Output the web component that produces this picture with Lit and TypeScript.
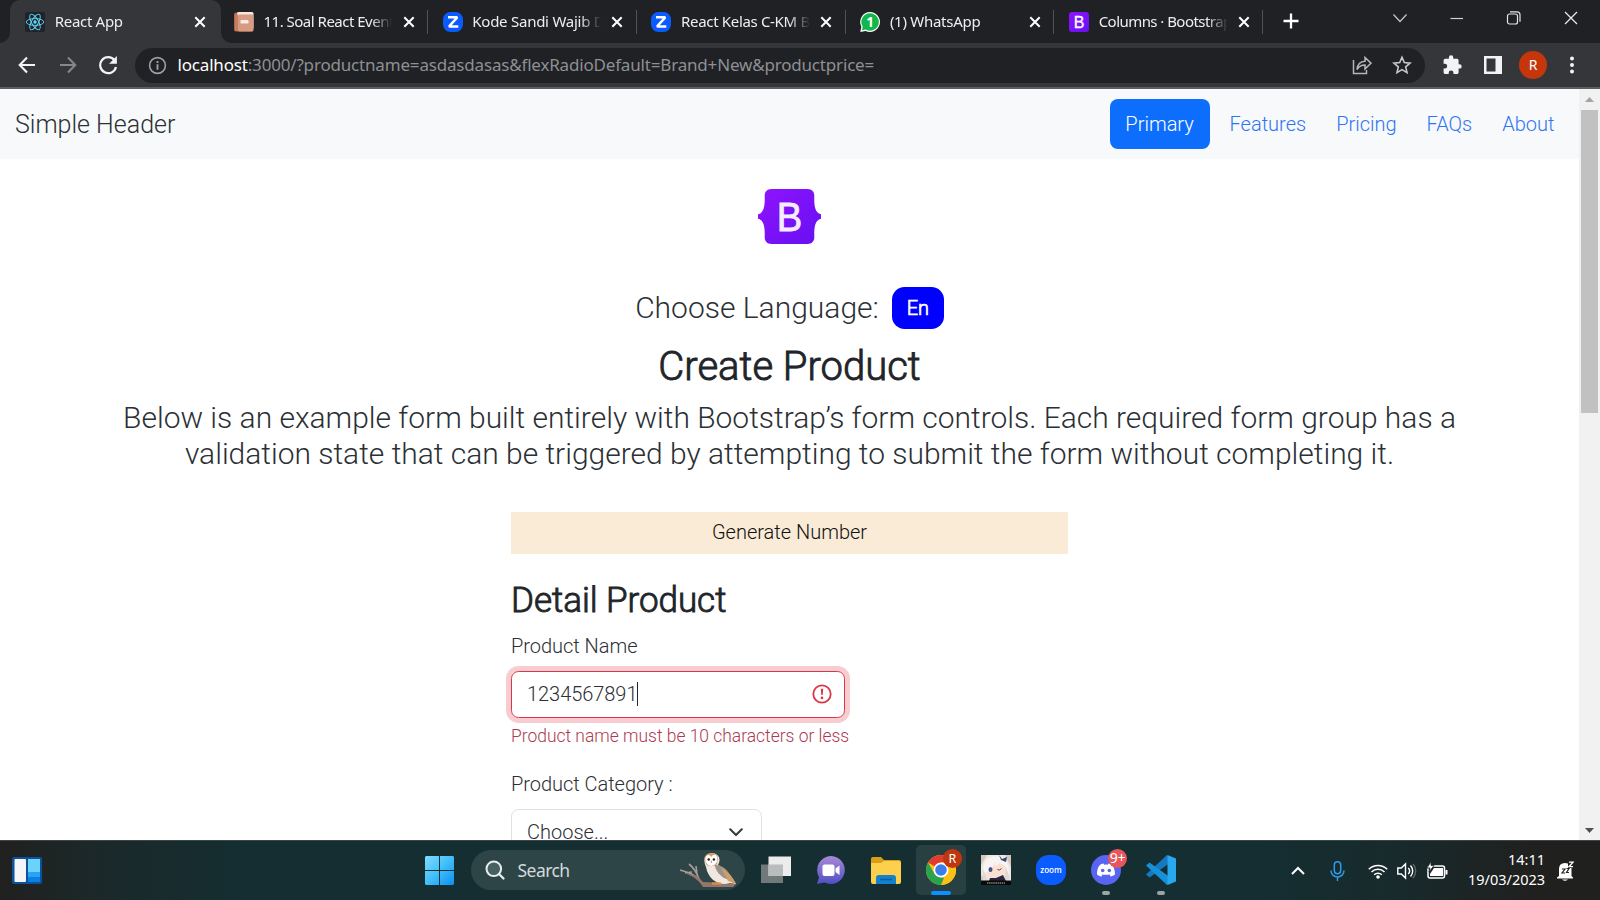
import { LitElement, html, css, svg } from "lit";
import { customElement } from "lit/decorators.js";

type Tab = { title: string; icon: unknown; active?: boolean; fit: string };

const reactIcon = svg`<svg width="20" height="20" viewBox="0 0 20 20"><rect width="20" height="20" rx="2" fill="#20232a"/><g fill="none" stroke="#61dafb" stroke-width=".9"><ellipse cx="10" cy="10" rx="8.8" ry="3.4"/><ellipse cx="10" cy="10" rx="8.8" ry="3.4" transform="rotate(60 10 10)"/><ellipse cx="10" cy="10" rx="8.8" ry="3.4" transform="rotate(120 10 10)"/></g><circle cx="10" cy="10" r="1.7" fill="#61dafb"/></svg>`;
const bookIcon = svg`<svg width="20" height="20" viewBox="0 0 20 20"><rect x="0" y=".5" width="19" height="19" rx="2" fill="#b5654c"/><rect x="3" y="0" width="16.500" height="17" rx="1.500" fill="#f3e7e0"/><rect x="4" y="2.500" width="15.500" height="17" rx="1.500" fill="#d89a80"/><rect x="1" y="2.500" width="3" height="16.500" fill="#c67c62"/><rect x="6.500" y="8" width="8" height="3.600" rx="1.200" fill="#f8ece6"/></svg>`;
const zIcon = svg`<svg width="20" height="20" viewBox="0 0 20 20"><rect width="20" height="20" rx="7.500" fill="#0b5cff"/><path d="M5 5.300h9.300L6 14.500h9.300" fill="none" stroke="#fff" stroke-width="2.500" stroke-linejoin="bevel"/></svg>`;
const waIcon = svg`<svg width="20" height="20" viewBox="0 0 20 20"><path d="M10 0a10 10 0 1 1-4.400 19L.3 20l1-5.300A10 10 0 0 1 10 0z" fill="#fff"/><path d="M10 1.300a8.700 8.700 0 1 1-4.300 16.200L2 18.300l.7-3.700A8.700 8.700 0 0 1 10 1.300z" fill="#12b64a"/><text x="10" y="15" text-anchor="middle" font-family="Open Sans" font-weight="700" font-size="13.500" fill="#fff">1</text></svg>`;
const bsIcon = svg`<svg width="20" height="20" viewBox="0 0 20 20"><defs><linearGradient id="bt" x1="0" y1="0" x2="1" y2="1"><stop stop-color="#9013fe"/><stop offset="1" stop-color="#6610f2"/></linearGradient></defs><rect width="20" height="20" rx="3" fill="url(#bt)"/><text x="10" y="15.600" text-anchor="middle" font-family="Liberation Sans" font-size="16" fill="#fff" stroke="#fff" stroke-width=".3">B</text></svg>`;

const TABS: Tab[] = [
  { title: "React App", icon: reactIcon, active: true, fit: "f0" },
  { title: "11. Soal React Event", icon: bookIcon, fit: "f1" },
  { title: "Kode Sandi Wajib Di", icon: zIcon, fit: "f2" },
  { title: "React Kelas C-KM Be", icon: zIcon, fit: "f3" },
  { title: "(1) WhatsApp", icon: waIcon, fit: "f4" },
  { title: "Columns · Bootstrap", icon: bsIcon, fit: "f5" },
];

@customElement("browser-tabs")
class BrowserTabs extends LitElement {
  static styles = css`
    :host { display: flex; height: 43px; background: #202124; padding-left: 10px; font-family: "Noto Sans", sans-serif; }
    .tab { width: 208.800px; height: 43px; box-sizing: border-box; padding: 0 12px 0 15px; display: flex; align-items: center; position: relative; flex: none; }
    .tab.active { background: #35363a; border-radius: 10px 10px 0 0; width: 210.800px; padding-right: 14px; }
    .tab.active + .tab { margin-left: -2px; }
    .tab.active::before, .tab.active::after { content: ""; position: absolute; bottom: 0; width: 10px; height: 10px; }
    .tab.active::before { left: -10px; background: radial-gradient(circle at 0 0, transparent 9.500px, #35363a 10px); }
    .tab.active::after { right: -10px; background: radial-gradient(circle at 100% 0, transparent 9.500px, #35363a 10px); }
    .icon { width: 20px; height: 20px; flex: none; margin-top: 1px; }
    .title { width: 130px; margin-left: 9.700px; margin-top: -1px; white-space: nowrap; overflow: hidden; color: #eceef0; font-size: 15px; line-height: 24px; height: 24px; -webkit-mask-image: linear-gradient(90deg, #000 108px, transparent 129px); mask-image: linear-gradient(90deg, #000 108px, transparent 129px); }
    .f0 { letter-spacing: -0.3px; } .f1 { letter-spacing: -0.5px; } .f2 { letter-spacing: -0.25px; } .f3 { letter-spacing: -0.33px; } .f4 { letter-spacing: -0.27px; } .f5 { letter-spacing: -0.55px; }
    .close { flex: none; margin-left: auto; margin-right: 1px; }
    .sep { position: absolute; right: -.5px; top: 10px; height: 24px; width: 1px; background: #505256; }
    .plus { margin: 13px 0 0 20.500px; flex: none; }
    .win { margin-left: auto; display: flex; align-items: center; height: 36px; gap: 37px; padding-right: 19px; }
    svg { display: block; }
  `;
  render() {
    return html`
      ${TABS.map((t) => html`<div class="tab ${t.active ? "active" : ""}">
        <div class="icon">${t.icon}</div><div class="title ${t.fit}">${t.title}</div>
        <svg class="close" width="12" height="12" viewBox="0 0 12 12"><path d="M1.300 1.300l9.400 9.400M10.700 1.300L1.300 10.700" stroke="#fff" stroke-width="2"/></svg>
        ${t.active ? "" : html`<div class="sep"></div>`}
      </div>`)}
      <svg class="plus" width="16" height="16" viewBox="0 0 16 16"><path d="M8 .5v15M.5 8h15" stroke="#fff" stroke-width="2.300"/></svg>
      <div class="win">
        <svg width="20" height="16" viewBox="0 0 20 16"><path d="M3.500 4.500L10 11.500l6.500-7" fill="none" stroke="#c8c8c8" stroke-width="1.200"/></svg>
        <svg width="20" height="16" viewBox="0 0 20 16"><path d="M3.500 8.500h12.500" stroke="#d0d0d0" stroke-width="1.200"/></svg>
        <svg width="20" height="16" viewBox="0 0 20 16"><g fill="none" stroke="#e4e4e4" stroke-width="1.200"><rect x="3.500" y="4" width="10" height="10" rx="2"/><path d="M6 1.800h7a3 3 0 0 1 3 3v7"/></g></svg>
        <svg width="20" height="16" viewBox="0 0 20 16"><path d="M4 2l12 12M16 2L4 14" stroke="#e8e8e8" stroke-width="1.300"/></svg>
      </div>`;
  }
}

@customElement("browser-toolbar")
class BrowserToolbar extends LitElement {
  static styles = css`
    :host { display: flex; align-items: center; height: 46px; box-sizing: border-box; background: #35363a; border-bottom: 2px solid #5c5d60; padding: 0 24px 0 17px; font-family: "Noto Sans", sans-serif; }
    svg { display: block; flex: none; }
    .nav { display: flex; gap: 20.500px; align-items: center; }
    .box { margin-left: 17px; width: 1290px; height: 35px; border-radius: 18px; background: #202124; display: flex; align-items: center; box-sizing: border-box; padding: 0 13px; }
    .url { margin: 0 0 0 10.500px; font-size: 17px; line-height: 24px; color: #8d9094; white-space: nowrap; letter-spacing: -0.18px; }
    .host { color: #fff; }
    .acts { margin-left: auto; display: flex; gap: 20px; }
    .right { display: flex; align-items: center; margin-left: auto; }
    .av { width: 28px; height: 28px; border-radius: 50%; background: #c5360c; color: #fff; font-size: 14px; line-height: 28px; text-align: center; margin: 0 15px 0 16px; }
    .panel { margin-left: 20px; }
    .dots { margin-left: 6px; }
  `;
  render() {
    return html`
      <div class="nav">
        <svg width="20" height="20" viewBox="0 0 20 20"><path d="M18 10H3M10 2.500L2.700 10 10 17.500" fill="none" stroke="#f1f3f4" stroke-width="2.100"/></svg>
        <svg width="20" height="20" viewBox="0 0 20 20"><path d="M2 10h15M10 2.500l7.300 7.500-7.300 7.500" fill="none" stroke="#85878a" stroke-width="2"/></svg>
        <svg width="20" height="20" viewBox="0 0 20 20"><path d="M16.600 5.300A8 8 0 1 0 18 12" fill="none" stroke="#f1f3f4" stroke-width="2.200"/><path d="M18.900 1v7.800h-7.800z" fill="#f1f3f4"/></svg>
      </div>
      <div class="box">
        <svg width="19" height="19" viewBox="0 0 19 19"><circle cx="9.500" cy="9.500" r="7.900" fill="none" stroke="#9aa0a6" stroke-width="1.600"/><path d="M9.500 8.300v5.400M9.500 5.100v1.900" stroke="#9aa0a6" stroke-width="1.900"/></svg>
        <div class="url"><span class="host">localhost</span>:3000/?productname=asdasdasas&amp;flexRadioDefault=Brand+New&amp;productprice=</div>
        <div class="acts">
          <svg width="20" height="20" viewBox="0 0 20 20"><path d="M1.500 5v13.500H14.500V15M5 14.500c.5-5 3.200-8 8-8.200V2.500l6 5.700-6 5.700v-3.800c-3.600.1-6 1.300-8 4.400z" fill="none" stroke="#b4b6b9" stroke-width="1.500"/></svg>
          <svg width="20" height="20" viewBox="0 0 20 20"><path d="M10 2.300l2.300 5.300 5.800.5-4.400 3.800 1.300 5.700-5-3-5 3 1.300-5.700L1.900 8.100l5.800-.5z" fill="none" stroke="#c6c8ca" stroke-width="1.600"/></svg>
        </div>
      </div>
      <div class="right">
        <svg width="20" height="20" viewBox="0 0 20 20"><path d="M16.500 9.200h-.9V5.400c0-1-.8-1.700-1.700-1.700h-3.600v-1.200a2.200 2.200 0 0 0-4.400 0v1.200H2.300C1.300 3.700.6 4.500.6 5.400v3.400h1.200a2.400 2.400 0 0 1 0 4.800H.6V17.200c0 1 .8 1.800 1.700 1.800h3.400v-1.200a2.400 2.400 0 0 1 4.800 0V19h3.400c1 0 1.700-.8 1.700-1.800v-3.600h.9a2.200 2.200 0 0 0 0-4.400z" fill="#f1f3f4"/></svg>
        <svg class="panel" width="20" height="20" viewBox="0 0 20 20"><path d="M1 1h18v18H1zM3.500 3.500v13h9v-13z" fill="#f1f3f4" fill-rule="evenodd"/></svg>
        <div class="av">R</div>
        <svg class="dots" width="8" height="20" viewBox="0 0 8 20"><g fill="#f1f3f4"><circle cx="4" cy="3.500" r="2"/><circle cx="4" cy="10" r="2"/><circle cx="4" cy="16.500" r="2"/></g></svg>
      </div>`;
  }
}

@customElement("product-page")
class ProductPage extends LitElement {
  static styles = css`
    :host { display: flex; height: 751px; overflow: hidden; background: #fff; font-family: Roboto, sans-serif; font-weight: 300; color: #2b3035; }
    .main { width: 1579px; height: 751px; overflow: hidden; flex: none; }
    .head { height: 70px; box-sizing: border-box; background: #f8f9fb; display: flex; align-items: center; padding: 0 24.500px 0 15px; }
    .brand { font-size: 25px; line-height: 38px; margin-top: 1px; }
    .links { margin-left: auto; display: flex; align-items: center; font-size: 20px; color: #2f75f2; }
    .links span { margin-left: 30px; }
    .links .btn { margin: 0 -10px 0 0; }
    .btn { background: #0d6efd; color: #fff; border-radius: 8px; width: 100px; height: 50px; line-height: 50px; text-align: center; }
    .center { display: flex; flex-direction: column; align-items: center; }
    .logo { margin-top: 30px; display: block; }
    .lang { display: flex; align-items: center; gap: 13px; margin-top: 42px; height: 43px; font-size: 30px; line-height: 36px; }
    .en { background: #00f; color: #fff; width: 52px; height: 42.500px; border-radius: 12.500px; font-size: 20px; line-height: 43px; text-align: center; -webkit-text-stroke: .7px #fff; margin-top: 1px; }
    h1 { margin: 14px 0 0; font-size: 40px; font-weight: 300; line-height: 48px; color: #212529; -webkit-text-stroke: .9px #212529; }
    .lead { margin: 9px 0 0; font-size: 29.970px; line-height: 36px; text-align: center; white-space: nowrap; }
    .form { width: 557px; margin: 40px 0 0 511px; }
    .gen { height: 42px; line-height: 41px; background: #faebd7; text-align: center; font-size: 20px; color: #111; }
    h2 { margin: 26px 0 0; font-size: 35px; font-weight: 300; line-height: 42px; color: #212529; letter-spacing: -.04px; -webkit-text-stroke: .9px #212529; }
    .label { font-size: 20px; line-height: 30px; letter-spacing: -.03px; }
    .l1 { margin-top: 9px; }
    .input { margin-top: 10px; width: 334px; height: 47px; box-sizing: border-box; border: 1px solid #dc3545; border-radius: 7.500px; box-shadow: 0 0 0 5px #f8cdd2; display: flex; align-items: center; padding: 0 12px 1px 15px; font-size: 20px; letter-spacing: -.05px; }
    .caret { width: 1px; height: 24px; background: #212529; }
    .input svg { margin-left: auto; }
    .err { margin-top: 5px; font-size: 17.460px; line-height: 26px; color: #ac3a51; white-space: nowrap; }
    .l2 { margin-top: 20px; }
    .select { margin-top: 10px; width: 251px; height: 47px; box-sizing: border-box; border: 1px solid #dee2e6; border-radius: 7.500px; display: flex; align-items: center; justify-content: space-between; padding: 0 18px 1px 15px; font-size: 20px; }
    .scroll { width: 21px; background: #f1f1f1; display: flex; flex-direction: column; align-items: center; }
    .thumb { width: 17px; height: 303px; background: #c1c1c1; flex: none; }
    .up { padding: 8px 0; display: block; flex: none; }
    .down { margin-top: auto; padding-bottom: 7px; display: block; }
  `;
  render() {
    return html`
      <div class="main">
        <div class="head"><div class="brand">Simple Header</div>
          <div class="links"><div class="btn">Primary</div><span>Features</span><span>Pricing</span><span>FAQs</span><span>About</span></div></div>
        <div class="center">
          <svg class="logo" width="63" height="55" viewBox="0 0 63 55"><defs><linearGradient id="bl" x1="0" y1="0" x2="1" y2="1"><stop stop-color="#9013fe"/><stop offset="1" stop-color="#6610f2"/></linearGradient></defs><path d="M13.500 0h36c4.500 0 7 3 6.800 7.200-.2 6.500-.2 16.800 6.700 18.100v4.400c-6.900 1.300-6.900 11.600-6.700 18.100.2 4.200-2.300 7.200-6.800 7.200h-36c-4.500 0-7-3-6.800-7.200C6.900 41.300 6.900 31 0 29.700v-4.400C6.900 24 6.900 13.700 6.700 7.200 6.500 3 9 0 13.500 0z" fill="url(#bl)"/><text x="31.500" y="42.300" text-anchor="middle" font-family="Liberation Sans" font-size="41" fill="#f6ecff" stroke="#f6ecff" stroke-width=".8" textLength="25.500" lengthAdjust="spacingAndGlyphs">B</text></svg>
          <div class="lang"><span>Choose Language:</span><div class="en">En</div></div>
          <h1>Create Product</h1>
          <p class="lead">Below is an example form built entirely with Bootstrap’s form controls. Each required form group has a<br>validation state that can be triggered by attempting to submit the form without completing it.</p>
        </div>
        <div class="form">
          <div class="gen">Generate Number</div>
          <h2>Detail Product</h2>
          <div class="label l1">Product Name</div>
          <div class="input">1234567891<div class="caret"></div><svg width="20" height="20" viewBox="0 0 20 20"><circle cx="10" cy="10" r="8.700" fill="none" stroke="#dc3545" stroke-width="1.800"/><path d="M8.800 4.800h2.400l-.5 6.300H9.300z" fill="#dc3545"/><circle cx="10" cy="13.900" r="1.300" fill="#dc3545"/></svg></div>
          <div class="err">Product name must be 10 characters or less</div>
          <div class="label l2">Product Category :</div>
          <div class="select">Choose...<svg width="14" height="9" viewBox="0 0 14 9"><path d="M1.200 1.200L7 7l5.800-5.800" fill="none" stroke="#343a40" stroke-width="2" stroke-linecap="round" stroke-linejoin="round"/></svg></div>
        </div>
      </div>
      <div class="scroll"><svg class="up" width="9" height="5" viewBox="0 0 9 5"><path d="M4.500 0L9 5H0z" fill="#a3a3a3"/></svg><div class="thumb"></div><svg class="down" width="9" height="5" viewBox="0 0 9 5"><path d="M4.500 5L9 0H0z" fill="#505050"/></svg></div>`;
  }
}

@customElement("task-bar")
class TaskBar extends LitElement {
  static styles = css`
    :host { display: flex; align-items: center; height: 60px; box-sizing: border-box; border-top: 1px solid #3d4545; background: linear-gradient(90deg, #20201f 0, #1c2829 90px, #142e31 240px, #142e31 1260px, #182a2c 1400px, #20201f 1530px, #20201f); font-family: "Noto Sans", sans-serif; color: #fff; padding-left: 12px; }
    svg { display: block; flex: none; overflow: visible; }
    .start { margin-left: 383px; }
    .search { margin-left: 17px; width: 274px; height: 40px; border-radius: 20px; background: #2e4548; display: flex; align-items: center; box-sizing: border-box; padding: 0 6px 0 14px; margin-top: -1px; }
    .search span { margin: 0 0 0 12.500px; font-size: 17.500px; color: #d3dadb; letter-spacing: -0.55px; }
    .owl { margin-left: auto; }
    .apps { display: flex; margin-left: 3px; }
    .app { width: 55px; height: 59px; display: flex; align-items: center; justify-content: center; position: relative; }
    .tile { position: absolute; left: 2.500px; top: 4px; width: 50px; height: 50px; border-radius: 5px; background: rgba(255,255,255,.09); }
    .ic { position: relative; margin-top: -1px; }
    .run { position: absolute; bottom: 5px; left: 23.500px; width: 8px; height: 4px; border-radius: 2px; background: #9aa5a6; }
    .run.on { width: 20px; left: 17.500px; background: #0a90ff; }
    .badge { position: absolute; left: 30px; top: 8px; width: 19px; height: 19px; border-radius: 50%; background: #c0370f; font-size: 12.500px; line-height: 19px; text-align: center; }
    .badge.red { background: #e5575c; font-size: 14px; letter-spacing: -.3px; line-height: 18px; }
    .tray { margin-left: auto; display: flex; align-items: center; padding-right: 25px; }
    .clock { text-align: right; font-size: 14.500px; line-height: 20px; letter-spacing: -.02px; margin: -3px 11px 0 20px; white-space: nowrap; }
    .mic { margin-left: 25px; } .wifi { margin-left: 23px; } .vol { margin-left: 9px; } .bat { margin-left: 10px; }
  `;
  app(icon: unknown, under: unknown = "", over: unknown = "") {
    return html`<div class="app">${under}<div class="ic">${icon}</div>${over}</div>`;
  }
  render() {
    return html`
      <svg width="30" height="27" viewBox="0 0 30 27"><rect width="30" height="27" rx="2" fill="#0a5299"/><rect x="2.500" y="2" width="11.500" height="23" rx="1" fill="#f5f5f7"/><rect x="16" y="2" width="12" height="13" fill="#6bd3fa"/><rect x="16" y="15" width="12" height="5" fill="#27a4f5"/><rect x="16" y="20" width="12" height="5" fill="#0b7fe2"/></svg>
      <svg class="start" width="29" height="29" viewBox="0 0 29 29"><defs><linearGradient id="w" x1="0" y1="0" x2="1" y2="1"><stop stop-color="#7fdcfd"/><stop offset=".5" stop-color="#41bff9"/><stop offset="1" stop-color="#0b8ff0"/></linearGradient></defs><path d="M1 0h13v14H0V1zM15 0h13l1 1v13H15zM0 15h14v14H1l-1-1zM15 15h14v13l-1 1H15z" fill="url(#w)"/></svg>
      <div class="search">
        <svg width="20" height="20" viewBox="0 0 20 20"><circle cx="8.800" cy="8.800" r="7.300" fill="#476063" stroke="#e8eeee" stroke-width="2"/><path d="M14 14l4.500 4.500" stroke="#e8eeee" stroke-width="2.300" stroke-linecap="round"/></svg>
        <span>Search</span>
        <svg class="owl" width="60" height="34" viewBox="0 0 60 34"><path d="M1 17c6 2 13 3 18 9M6 20l7-1M10 11c4 3 7 7 10 15M17 13l1 8" fill="none" stroke="#a79c98" stroke-width="1.600"/><path d="M8 21c7 0 11 2 16 8l24 1 9 1-3 3H24c-4-6-8-10-16-13z" fill="#96766a"/><path d="M27 14C23 5 27 0 33 0c8 1 9 7 6 12 8 3 14 12 18 19l-6-1-5 1c-9 0-17-6-19-17z" fill="#efe8e1"/><path d="M36 12c10 0 15 8 17 16l-8-3c-6-4-9-9-9-13z" fill="#9a908c"/><path d="M42 15c7 3 12 10 15 16l-8-3z" fill="#cf9e67"/><path d="M25.500 5C26-1.500 38-1.500 39 5l-1 6c-2 3-9 3-11 0z" fill="#d19a62"/><path d="M26.300 6c0-5 5-5 6-2 2-4 6.700-2 6 2 0 4-3 7-6 7s-6-3-6-7z" fill="#fff"/><circle cx="29.700" cy="6.500" r="1.200" fill="#222"/><circle cx="34.900" cy="6.500" r="1.200" fill="#222"/><path d="M32.300 7.500v2.500" stroke="#c98b72"/><path d="M33 30.500h9" stroke="#dd913d" stroke-width="2.200"/></svg>
      </div>
      <div class="apps">
        ${this.app(svg`<svg width="30" height="30" viewBox="0 0 30 30"><path d="M0 9.500h22v18.500H0z" fill="#72797a"/><path d="M7.500 1.500H30V21H7.500z" fill="#ececec"/><path d="M7.500 9.500H22V21H7.500z" fill="#b9bdbd"/></svg>`)}
        ${this.app(svg`<svg width="30" height="30" viewBox="0 0 30 30"><defs><linearGradient id="ch" x1="0" y1="0" x2="0" y2="1"><stop stop-color="#a88ad8"/><stop offset="1" stop-color="#4f4fc4"/></linearGradient></defs><path d="M15 1a14 14 0 1 1-6.500 26.500L1 29l2-7A14 14 0 0 1 15 1z" fill="url(#ch)"/><rect x="6.500" y="9.500" width="12" height="11.500" rx="2" fill="#fff"/><path d="M19.500 13.500l4-3v9.500l-4-3z" fill="#fff"/></svg>`)}
        ${this.app(svg`<svg width="30" height="30" viewBox="0 0 30 30"><path d="M0 4q0-2 2-2h8l3 3h15q2 0 2 2v9H0z" fill="#d99f16"/><path d="M0 8h10l3-2h15q2 0 2 2v19q0 2-2 2H2q-2 0-2-2z" fill="#fccf4c"/><path d="M5 29v-6q0-3 3-3h14q3 0 3 3v6z" fill="#1482ca"/><path d="M9 24.500h12" stroke="#0a5ba0" stroke-width="1.500"/></svg>`)}
        ${this.app(svg`<svg width="30" height="30" viewBox="0 0 30 30"><circle cx="15" cy="15" r="15" fill="#fbc116"/><path d="M15 15L2 7.500A15 15 0 0 1 28 7.500H15z" fill="#e33b2e"/><path d="M15 7.500h13a15 15 0 0 1-13 22.500l6.500-11.300z" fill="#fbc116"/><path d="M2 7.500l6.500 11.300 6.500 3.700 3 .2L15 30A15 15 0 0 1 2 7.500z" fill="#2ba24c"/><circle cx="15" cy="15" r="7.500" fill="#fff"/><circle cx="15" cy="15" r="5.800" fill="#3b7de9"/></svg>`, html`<div class="tile"></div><div class="run on"></div>`, html`<div class="badge">R</div>`)}
        ${this.app(svg`<svg width="30" height="30" viewBox="0 0 30 30"><rect width="30" height="30" fill="#eee8e2"/><path d="M0 0h6L0 10zM24 0h6v12zM0 20l6 6H0z" fill="#d3c7be"/><path d="M4 13C5 3 24 3 25 13c0 8-5 12-10 12S4 21 4 13z" fill="#f9e0d2"/><path d="M2 16C2 1 14-1 22 3c5 3 6 9 6 17l-4-9-5-3-5 4 1-5-6 8-4 3z" fill="#f7f4f1"/><path d="M2 14l4 10 4 2H2zM25 12l4 12-6 2z" fill="#e2d9d3"/><ellipse cx="9.500" cy="14.500" rx="2" ry="2.600" fill="#4b508b"/><path d="M16.500 14.500q2 1.500 4-1" fill="none" stroke="#554050"/><path d="M18 0l3 4 5-2-1 5-5-2z" fill="#3a4378"/><path d="M9 23l6 0 7-3 3 6H8z" fill="#292442"/><rect y="25.500" width="30" height="4.500" fill="#090909"/><path d="M6 28h18" stroke="#bbb" stroke-width="1" stroke-dasharray="1.500 .6"/></svg>`)}
        ${this.app(svg`<svg width="30" height="30" viewBox="0 0 30 30"><rect width="30" height="30" rx="12.500" fill="#0b5cff"/><text x="15" y="17.500" text-anchor="middle" textLength="21.500" lengthAdjust="spacingAndGlyphs" font-family="Open Sans" font-weight="600" font-size="9" fill="#fff">zoom</text></svg>`)}
        ${this.app(svg`<svg width="30" height="30" viewBox="0 0 30 30"><circle cx="15" cy="15" r="15" fill="#5865f2"/><path d="M10.500 9l2-.5.700 1.200q1.800-.3 3.600 0l.7-1.200 2 .5c2.500 1 4.600 5 4.500 10.500-1.300 1.200-3 1.800-4.400 2l-1-1.700 1.400-.8q-5 1.700-10 0l1.400.8-1 1.700c-1.500-.2-3.200-.8-4.400-2C5.900 14 8 10 10.500 9z" fill="#fff"/><circle cx="11.700" cy="15.500" r="1.800" fill="#5865f2"/><circle cx="18.300" cy="15.500" r="1.800" fill="#5865f2"/></svg>`, "", html`<div class="badge red">9+</div><div class="run"></div>`)}
        ${this.app(svg`<svg width="30" height="30" viewBox="0 0 30 30"><path d="M0 19.500L21 0l2 2v6.500L3.500 22.500z" fill="#1479c3"/><path d="M0 10.500L3.500 7.500 23 21.500V28l-2 2z" fill="#1690d8"/><path d="M21.500 0L30 3.500v23L21.500 30z" fill="#28a8ed"/></svg>`, "", html`<div class="run"></div>`)}
      </div>
      <div class="tray">
        <svg width="14" height="8" viewBox="0 0 14 8"><path d="M1 7l6-6 6 6" fill="none" stroke="#fff" stroke-width="2"/></svg>
        <svg class="mic" width="15" height="20" viewBox="0 0 15 20"><g fill="none" stroke="#2e9bea" stroke-width="1.500"><rect x="4.300" y=".8" width="6.400" height="12" rx="3.200"/><path d="M1 9.500a6.500 6.500 0 0 0 13 0M7.500 16v4"/></g></svg>
        <svg class="wifi" width="20" height="16" viewBox="0 0 20 16"><g fill="none" stroke="#fff" stroke-width="1.500"><path d="M.8 6.200a13 13 0 0 1 18.400 0M3.500 9a9.200 9.200 0 0 1 13 0M6.200 11.700a5.400 5.400 0 0 1 7.600 0"/></g><circle cx="10" cy="14" r="1.800" fill="#fff"/></svg>
        <svg class="vol" width="20" height="16" viewBox="0 0 20 16"><g fill="none" stroke="#fff" stroke-width="1.400"><path d="M.8 5h3.500L8.500 1v14l-4.200-4H.8z"/><path d="M11.300 5a4.500 4.500 0 0 1 0 6M13.500 2.500a8 8 0 0 1 0 11"/><path d="M16 1a10.500 10.500 0 0 1 0 14" stroke="#666"/></g></svg>
        <svg class="bat" width="21" height="17" viewBox="0 0 21 17"><rect x="1" y="4" width="16.500" height="12" rx="2" fill="none" stroke="#fff" stroke-width="1.500"/><path d="M7 6h9v8H3v-2z" fill="#fff"/><path d="M18.500 8h2v4.500h-2z" fill="#fff"/><path d="M4 -.5L0 6h3L2 10l5-6.500H4z" fill="#fff" stroke="#1c2526" stroke-width=".8"/></svg>
        <div class="clock">14:11<br>19/03/2023</div>
        <svg width="19" height="20" viewBox="0 0 19 20"><path d="M3 15V8q0-6 6-6 6.500 0 6.500 6v7l1.500 1.500v1H1v-1zM6 18.500h6q-3 2.500-6 0z" fill="#fff"/><path d="M6 8h3l-3 4h3M10.500 7.500h2.500l-2.500 4H13" fill="none" stroke="#202322" stroke-width="1.200"/><path d="M12 0h6v7h-6z" fill="#202322"/><path d="M13 1.200h4l-4 4.500h4" fill="none" stroke="#fff" stroke-width="1.300"/></svg>
      </div>`;
  }
}

@customElement("app-root")
class AppRoot extends LitElement {
  static styles = css`
    :host { display: block; width: 1600px; height: 900px; overflow: hidden; }
  `;
  render() {
    return html`<browser-tabs></browser-tabs><browser-toolbar></browser-toolbar><product-page></product-page><task-bar></task-bar>`;
  }
}
